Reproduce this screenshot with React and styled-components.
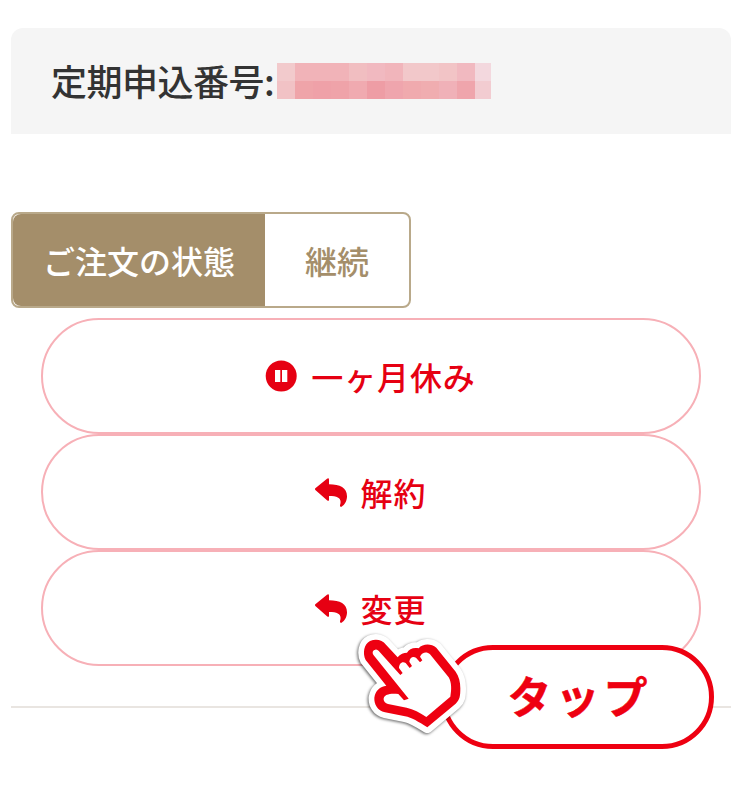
import React from "react";
import styled, { createGlobalStyle } from "styled-components";

const Global = createGlobalStyle`
  * { box-sizing: border-box; }
  body { margin: 0; background: #fff; font-family: "Noto Sans CJK JP", sans-serif; }
`;

const Page = styled.main`
  position: relative;
  width: 746px;
  height: 803px;
  padding: 28px 15px 0 11px;
  overflow: hidden;
`;

const Header = styled.header`
  display: flex;
  align-items: center;
  height: 106px;
  padding: 0 40px;
  border-radius: 12px 12px 0 0;
  background: #f5f5f5;
  color: #333;
  font-size: 36px;
  font-weight: 500;
  line-height: 52px;
  white-space: nowrap;
`;

const HeaderLabel = styled.span`
  width: 226px;
  padding-bottom: 2px;
  letter-spacing: -0.5px;
`;

const Mosaic = styled.div`
  display: grid;
  grid-template-columns: repeat(11, 18px) 16px;
  grid-auto-rows: 18px;
`;

const Tile = styled.i`
  background: ${(p) => p.$color};
`;

const Status = styled.section`
  display: flex;
  width: 400px;
  height: 96px;
  margin-top: 78px;
  border: 2px solid #b9a98a;
  border-radius: 8px;
  font-size: 32px;
  font-weight: 500;
  line-height: 92px;
  text-align: center;
`;

const StatusName = styled.div`
  width: 252px;
  border-radius: 8px 0 0 8px;
  background: #a48e6a;
  color: #fff;
`;

const StatusValue = styled.div`
  flex: 1;
  color: #a48e6a;
`;

const Actions = styled.nav`
  display: flex;
  flex-direction: column;
  height: 400px;
  padding: 10px 30px 0;
  border-bottom: 2px solid #e9e5e1;
`;

const ActionButton = styled.button`
  display: flex;
  align-items: center;
  justify-content: center;
  gap: 14px;
  height: 116px;
  flex: none;
  padding: 0 1px 0 0;
  border: 2px solid #f7b0b7;
  border-radius: 58px;
  background: #fff;
  color: #e60012;
  font: 500 32px/48px "Noto Sans CJK JP", sans-serif;
  letter-spacing: 0.9px;
  svg { flex: none; }
`;

const TapBadge = styled.div`
  position: absolute;
  left: 441px;
  top: 645px;
  width: 273px;
  height: 104px;
  padding-left: 4px;
  border: 5px solid #ee0011;
  border-radius: 52px;
  background: #fff;
  color: #ee0011;
  font-size: 44px;
  font-weight: 700;
  letter-spacing: 4px;
  line-height: 90px;
  text-align: center;
  -webkit-text-stroke: 0.5px #ee0011;
`;

const Hand = styled.svg`
  position: absolute;
  left: 340px;
  top: 620px;
  width: 140px;
  height: 130px;
  filter: drop-shadow(-0.5px 1px 1.5px rgba(0, 0, 0, 0.6));
`;

const TOP = ["#f2cacc", "#f1b3b8", "#f1b3b8", "#f1b3b8", "#f1bec1", "#f1b9c0", "#f1b5bb", "#f2c8ca", "#f2c8ca", "#f2c4c6", "#f1b9c0", "#f3d8de"];
const BOTTOM = ["#f1c2c5", "#efa4a9", "#efa1a8", "#efa3a9", "#f0aab0", "#ee9da5", "#efa5ad", "#f0aaae", "#f0adb0", "#f0b1b8", "#efa5ac", "#f2ccd1"];

const PauseIcon = () => (
  <svg width="32" height="32" viewBox="0 0 32 32">
    <circle cx="16.2" cy="16" r="15.5" fill="currentColor" />
    <path d="M10 10H15.3V22H10ZM17 10H22.3V22H17Z" fill="#fff" />
  </svg>
);

const ReplyIcon = () => (
  <svg width="32" height="32" viewBox="0 -6 96 96">
    <path
      d="M1 31L36 2Q42 -1 42 5V19C75 19 96 29 96 55C96 69 89 81 80 86Q74 88 75 82C81 62 72 54 42 54V65Q42 71 36 67L1 36Q-1 33 1 31Z"
      fill="currentColor"
    />
  </svg>
);

const outline =
  "M77 270C67 250 72 222 90 213C110 205 127 211 138 224L173 262C180 252 192 248 201 248C207 237 220 232 236 235C248 221 273 220 289 233L347 305C357 320 361 335 361 355C361 380 359 390 347 401L262 472C235 455 215 443 195 439L135 427C112 422 102 402 103 383C106 362 120 349 139 347Z";

export default function App() {
  return (
    <>
      <Global />
      <Page>
        <Header>
          <HeaderLabel>定期申込番号:</HeaderLabel>
          <Mosaic>
            {[...TOP, ...BOTTOM].map((color, i) => <Tile key={i} $color={color} />)}
          </Mosaic>
        </Header>
        <Status>
          <StatusName>ご注文の状態</StatusName>
          <StatusValue>継続</StatusValue>
        </Status>
        <Actions>
          <ActionButton><PauseIcon /><span>一ヶ月休み</span></ActionButton>
          <ActionButton><ReplyIcon /><span>解約</span></ActionButton>
          <ActionButton><ReplyIcon /><span>変更</span></ActionButton>
        </Actions>
        <TapBadge>タップ</TapBadge>
        <Hand viewBox="0 150 420 390">
          <path d={outline} fill="#fff" stroke="#fff" strokeWidth="34" strokeLinejoin="round" />
          <path d={outline} fill="#ee0011" />
          <path
            d="M101 256C95 247 99 240 106 239C111 238 115 241 119 246L181 315L188 309L177 294C177 280 187 272 197 279L209 294L216 288L208 275C209 264 218 257 228 263L240 277L247 271L240 260C247 245 261 244 270 253L326 322C335 338 335 358 331 380L259 441C240 427 220 418 200 413L144 402C128 398 127 381 139 375C151 370 163 371 175 372L192 391L206 386Z"
            fill="#fff"
          />
        </Hand>
      </Page>
    </>
  );
}
